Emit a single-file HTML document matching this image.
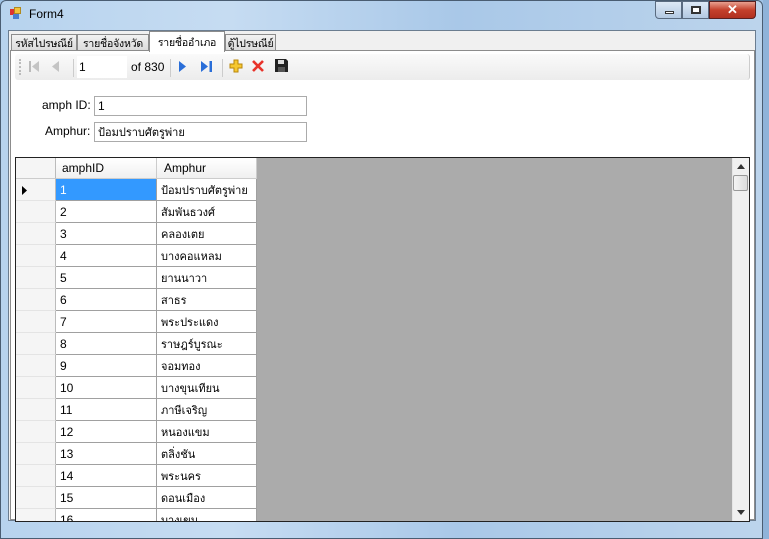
<!DOCTYPE html>
<html><head><meta charset="utf-8"><style>
*{margin:0;padding:0;box-sizing:border-box}
body{width:769px;height:539px;overflow:hidden;background:#9fc3e6;font-family:"Liberation Sans","Noto Sans CJK SC",sans-serif;font-size:12px;color:#000;position:relative}
.a{position:absolute}
.th{font-family:"Liberation Sans","Noto Sans CJK SC",sans-serif;font-size:11px;white-space:nowrap;overflow:hidden;line-height:14px}
.tab{font-size:10.5px;letter-spacing:-0.2px;text-align:center;padding:2px 0 0 0!important}
.c{position:absolute;top:0;height:22px;border-right:1px solid #a0a0a0;border-bottom:1px solid #a0a0a0;background:#fff;padding:3px 4px;font-size:12px;line-height:16px;overflow:hidden;white-space:nowrap}
.c.th{line-height:14px;padding-top:5px}
</style></head><body>
<div class="a" style="left:0;top:0;width:763px;height:539px;background:linear-gradient(90deg,#b7d3ee,#c6dcf2 30%,#a9c8e8 60%,#bcd4ec);border:1px solid #4a5d72;border-radius:6px 6px 0 0"></div>
<div class="a" style="left:763px;top:0;width:6px;height:539px;background:#8fb3d9"></div>
<div class="a" style="left:10px;top:9px;width:6px;height:6px;background:#d33"></div>
<div class="a" style="left:14px;top:7px;width:7px;height:7px;background:#f4c23a;border:1px solid #b08a20"></div>
<div class="a" style="left:13px;top:14px;width:6px;height:5px;background:#4a7fd0"></div>
<div class="a" style="left:29px;top:7px;font-size:12px">Form4</div>
<div class="a" style="left:655px;top:1px;width:27px;height:18px;border:1px solid #5a6b80;border-radius:0 0 0 4px;background:linear-gradient(#dde9f6,#b3c9e2)"><div class="a" style="left:9px;top:9px;width:9px;height:3px;border:1px solid #333;background:#fff"></div></div>
<div class="a" style="left:682px;top:1px;width:27px;height:18px;border:1px solid #5a6b80;background:linear-gradient(#dde9f6,#b3c9e2)"><div class="a" style="left:8px;top:4px;width:10px;height:8px;border:2px solid #333;background:#fff"></div></div>
<div class="a" style="left:709px;top:1px;width:47px;height:18px;border:1px solid #5a2020;border-radius:0 0 4px 0;background:linear-gradient(#e8a090,#c4402c 50%,#b03020);color:#fff;font-weight:bold;text-align:center;font-size:13px;line-height:16px">✕</div>
<div class="a" style="left:8px;top:30px;width:748px;height:491px;background:#f0f0f0;border:1px solid #6b7d90"></div>
<div class="a th tab" style="left:11px;top:34px;width:66px;height:17px;border:1px solid #8c8c8c;background:linear-gradient(#f2f2f2,#dcdcdc)">รหัสไปรษณีย์</div>
<div class="a th tab" style="left:77px;top:34px;width:72px;height:17px;border:1px solid #8c8c8c;background:linear-gradient(#f2f2f2,#dcdcdc)">รายชื่อจังหวัด</div>
<div class="a th tab" style="left:225px;top:34px;width:51px;height:17px;border:1px solid #8c8c8c;background:linear-gradient(#f2f2f2,#dcdcdc)">ตู้ไปรษณีย์</div>
<div class="a" style="left:10px;top:50px;width:745px;height:470px;background:#fff;border:1px solid #8c8c8c"></div>
<div class="a th tab" style="left:149px;top:31px;width:76px;height:21px;border:1px solid #8c8c8c;border-bottom:none;background:#fff;padding-top:4px!important">รายชื่ออำเภอ</div>
<div class="a" style="left:15px;top:54px;width:735px;height:26px;border-radius:3px;background:linear-gradient(#fafafa,#ececec);border-right:1px solid #ccc"></div>
<div class="a" style="left:19px;top:59px;width:2px;height:16px;border-left:2px dotted #bbb"></div>
<div class="a" style="left:29px;top:61px;width:2px;height:11px;background:#bbb"></div>
<svg class="a" style="left:30px;top:61px" width="10" height="11"><path d="M9 0L2 5.5 9 11z" fill="#c4c4c4"/></svg>
<svg class="a" style="left:52px;top:61px" width="8" height="11"><path d="M7 0L0 5.5 7 11z" fill="#c4c4c4"/></svg>
<div class="a" style="left:73px;top:59px;width:1px;height:18px;background:#ccc"></div>
<div class="a" style="left:77px;top:56px;width:50px;height:22px;background:#fff"></div>
<div class="a" style="left:79px;top:60px">1</div>
<div class="a" style="left:131px;top:60px">of 830</div>
<div class="a" style="left:170px;top:59px;width:1px;height:18px;background:#ccc"></div>
<svg class="a" style="left:179px;top:61px" width="8" height="11"><path d="M0 0L7 5.5 0 11z" fill="#2a6ed8"/></svg>
<svg class="a" style="left:201px;top:61px" width="12" height="11"><path d="M0 0L7 5.5 0 11z" fill="#2a6ed8"/><rect x="8.5" y="0" width="2.5" height="11" fill="#2a6ed8"/></svg>
<div class="a" style="left:222px;top:59px;width:1px;height:18px;background:#ccc"></div>
<svg class="a" style="left:229px;top:59px" width="14" height="14"><path d="M5 1h4v4h4v4H9v4H5V9H1V5h4z" fill="#f6c830" stroke="#b8860b"/></svg>
<svg class="a" style="left:251px;top:59px" width="14" height="14"><path d="M2 2L12 12M12 2L2 12" stroke="#e8332a" stroke-width="2.6"/></svg>
<svg class="a" style="left:275px;top:59px" width="13" height="13"><path d="M0 0h11l2 2v11H0z" fill="#222"/><rect x="3" y="1" width="6" height="4" fill="#ddd"/><rect x="3" y="8" width="7" height="5" fill="#555"/></svg>
<div class="a" style="left:42px;top:98px">amph ID:</div>
<div class="a" style="left:94px;top:96px;width:213px;height:20px;border:1px solid #ababab;background:#fff;padding:2px 3px">1</div>
<div class="a" style="left:45px;top:124px">Amphur:</div>
<div class="a th" style="left:94px;top:122px;width:213px;height:20px;border:1px solid #ababab;background:#fff;padding:3px 3px">ป้อมปราบศัตรูพ่าย</div>
<div class="a" style="left:15px;top:157px;width:735px;height:365px;border:1px solid #222;background:#ababab;overflow:hidden">
 <div class="a" style="left:716px;top:0;width:17px;height:363px;background:#f0f0f0;border-left:1px solid #e6e6e6"></div>
 <svg class="a" style="left:721px;top:6px" width="8" height="5"><path d="M0 5L4 0 8 5z" fill="#333"/></svg>
 <div class="a" style="left:717px;top:17px;width:15px;height:16px;border:1px solid #999;border-radius:2px;background:linear-gradient(90deg,#f4f4f4,#dcdcdc)"></div>
 <svg class="a" style="left:721px;top:352px" width="8" height="5"><path d="M0 0L4 5 8 0z" fill="#333"/></svg>
 <div class="a" style="left:0;top:0;width:241px;height:363px;background:#fff"></div>
 <div class="a" style="left:0;top:0;width:40px;height:21px;background:#f5f5f5;border-right:1px solid #bbb;border-bottom:1px solid #ccc"></div>
 <div class="a" style="left:40px;top:0;width:101px;height:21px;background:linear-gradient(#fff,#f0f0f0);border-right:1px solid #ccc;border-bottom:1px solid #ccc;padding:3px 6px">amphID</div>
 <div class="a" style="left:141px;top:0;width:100px;height:21px;background:linear-gradient(#fff,#f0f0f0);border-right:1px solid #ccc;border-bottom:1px solid #ccc;padding:3px 7px">Amphur</div>
 <div id="rows"></div>
</div>
<script>
var n=["ป้อมปราบศัตรูพ่าย","สัมพันธวงศ์","คลองเตย","บางคอแหลม","ยานนาวา","สาธร","พระประแดง","ราษฎร์บูรณะ","จอมทอง","บางขุนเทียน","ภาษีเจริญ","หนองแขม","ตลิ่งชัน","พระนคร","ดอนเมือง","บางเขน"];
var h="";
for(var i=0;i<16;i++){var t=21+i*22;
h+='<div class="c" style="left:0;top:'+t+'px;width:40px;background:#f5f5f5;border-right:1px solid #bbb;border-bottom:1px solid #e4e4e4">'+(i==0?'<svg width="6" height="9" style="position:absolute;left:6px;top:7px"><path d="M0 0L5 4.5 0 9z" fill="#000"/></svg>':'')+'</div>';
h+='<div class="c" style="left:40px;top:'+t+'px;width:101px;'+(i==0?'background:#3399ff;color:#fff;':'')+'">'+(i+1)+'</div>';
h+='<div class="c th" style="left:141px;top:'+t+'px;width:100px;font-size:11px">'+n[i]+'</div>';}
document.getElementById("rows").innerHTML=h;
</script>
</body></html>
